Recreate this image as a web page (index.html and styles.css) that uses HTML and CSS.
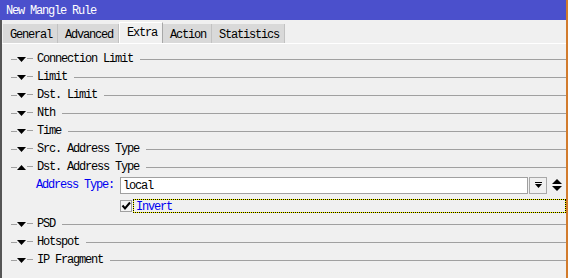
FILE: index.html
```html
<!DOCTYPE html>
<html lang="en">
  <head>
    <meta charset="UTF-8" />
    <title>New Mangle Rule</title>
    <link rel="stylesheet" href="styles.css">
  </head>
  <body>
    <div class="window">
      <div class="titlebar">New Mangle Rule</div>
      <div class="frame">
        <div class="tabs">
          <div class="tab">General</div>
          <div class="tab">Advanced</div>
          <div class="tab active">Extra</div>
          <div class="tab">Action</div>
          <div class="tab">Statistics</div>
        </div>
        <div class="panel">
          <div class="section">
            <svg class="arrow" width="9" height="5"><polygon points="0,0 9,0 4.5,5" /></svg>
            <span class="name">Connection Limit</span>
          </div>
          <div class="section">
            <svg class="arrow" width="9" height="5"><polygon points="0,0 9,0 4.5,5" /></svg>
            <span class="name">Limit</span>
          </div>
          <div class="section">
            <svg class="arrow" width="9" height="5"><polygon points="0,0 9,0 4.5,5" /></svg>
            <span class="name">Dst. Limit</span>
          </div>
          <div class="section">
            <svg class="arrow" width="9" height="5"><polygon points="0,0 9,0 4.5,5" /></svg>
            <span class="name">Nth</span>
          </div>
          <div class="section">
            <svg class="arrow" width="9" height="5"><polygon points="0,0 9,0 4.5,5" /></svg>
            <span class="name">Time</span>
          </div>
          <div class="section">
            <svg class="arrow" width="9" height="5"><polygon points="0,0 9,0 4.5,5" /></svg>
            <span class="name">Src. Address Type</span>
          </div>
          <div class="section">
            <svg class="arrow" width="9" height="5"><polygon points="0,5 9,5 4.5,0" /></svg>
            <span class="name">Dst. Address Type</span>
          </div>

          <div class="field">
            <label class="label">Address Type:</label>
            <div class="input">local</div>
            <div class="drop">
              <svg width="7" height="7"><rect x="0" y="0" width="7" height="1" /><polygon points="0,2 7,2 3.5,6" /></svg>
            </div>
            <svg class="sorter" width="10" height="12"><polygon points="0,5 10,5 5,0" /><polygon points="0,7 10,7 5,12" /></svg>
          </div>
          <div class="check-row">
            <div class="checkbox">
              <svg width="10" height="10"><polyline points="1.5,4.5 4,7.5 9,1.5" /></svg>
            </div>
            <div class="check-label">Invert</div>
          </div>

          <div class="section">
            <svg class="arrow" width="9" height="5"><polygon points="0,0 9,0 4.5,5" /></svg>
            <span class="name">PSD</span>
          </div>
          <div class="section">
            <svg class="arrow" width="9" height="5"><polygon points="0,0 9,0 4.5,5" /></svg>
            <span class="name">Hotspot</span>
          </div>
          <div class="section">
            <svg class="arrow" width="9" height="5"><polygon points="0,0 9,0 4.5,5" /></svg>
            <span class="name">IP Fragment</span>
          </div>
        </div>
      </div>
    </div>
  </body>
</html>
```

FILE: styles.css
```css
body {
  margin: 0;
  background: #f0f0f0;
  font-family: "Liberation Mono", "DejaVu Sans Mono", monospace;
  font-size: 12px;
  letter-spacing: -1.2px;
  color: #000;
}
.window {
  width: 568px;
  height: 278px;
  box-sizing: border-box;
  border-right: 2px solid #d27b2c;
  display: flex;
  flex-direction: column;
  overflow: hidden;
}
.titlebar {
  height: 20px;
  line-height: 23px;
  overflow: hidden;
  background: #4b50cc;
  color: #fff;
  padding-left: 6px;
  flex-shrink: 0;
}
.frame {
  flex: 1;
  border-left: 2px solid #555;
  background: #f0f0f0;
}
.tabs {
  display: flex;
  align-items: flex-end;
  height: 23px;
  padding-left: 1px;
  border-bottom: 1px solid #fff;
}
.tab {
  height: 19px;
  line-height: 22px;
  overflow: hidden;
  padding: 0 5px 0 7px;
  background: #d9d9d9;
  border-right: 1px solid #c2c2c2;
}
.tab.active {
  height: 21px;
  line-height: 21px;
  background: #f0f0f0;
  border-top: 1px solid #fff;
  border-left: 1px solid #fff;
  border-right: 1px solid #a8a8a8;
  box-sizing: border-box;
}
.panel {
  padding-top: 6px;
  display: flex;
  flex-direction: column;
}
.section {
  display: flex;
  align-items: center;
  height: 18px;
  padding-left: 9px;
}
.section::before {
  content: "";
  width: 6px;
  height: 1px;
  background: #a0a0a0;
}
.arrow {
  fill: #000;
}
.arrow + .name::before {
  content: "";
  display: inline-block;
  vertical-align: middle;
  width: 6px;
  height: 1px;
  background: #a0a0a0;
  margin: 0 4px 0 1px;
}
.section::after {
  content: "";
  flex: 1;
  height: 1px;
  background: #a0a0a0;
  margin-left: 7px;
}
.field {
  display: flex;
  align-items: center;
  height: 18px;
}
.label {
  width: 112px;
  box-sizing: border-box;
  padding-left: 34px;
  color: #0000f0;
  margin-right: 6px;
}
.input {
  width: 408px;
  height: 17px;
  box-sizing: border-box;
  border: 1px solid #a0a0a0;
  background: #fff;
  padding-left: 2px;
  line-height: 16px;
}
.drop {
  width: 18px;
  height: 17px;
  box-sizing: border-box;
  border: 1px solid #a8a8a8;
  margin-left: 1px;
  display: flex;
  align-items: center;
  justify-content: center;
}
.drop svg {
  fill: #000;
}
.sorter {
  margin-left: 5px;
}
.check-row {
  display: flex;
  align-items: center;
  height: 14px;
  margin: 5px 0 2px 118px;
}
.checkbox {
  width: 12px;
  height: 12px;
  box-sizing: border-box;
  border: 1px solid #a0a0a0;
  background: #f4f4f4;
  display: flex;
  align-items: center;
  justify-content: center;
}
.checkbox polyline {
  fill: none;
  stroke: #000;
  stroke-width: 2;
}
.check-label {
  flex: 1;
  height: 14px;
  box-sizing: border-box;
  margin-left: 1px;
  padding-left: 2px;
  line-height: 14px;
  color: #0000f0;
  border: 1px dotted #000;
  background: linear-gradient(#f0f0f0, #f0f0f0) padding-box,
    linear-gradient(#ffff00, #ffff00) border-box;
}
```
